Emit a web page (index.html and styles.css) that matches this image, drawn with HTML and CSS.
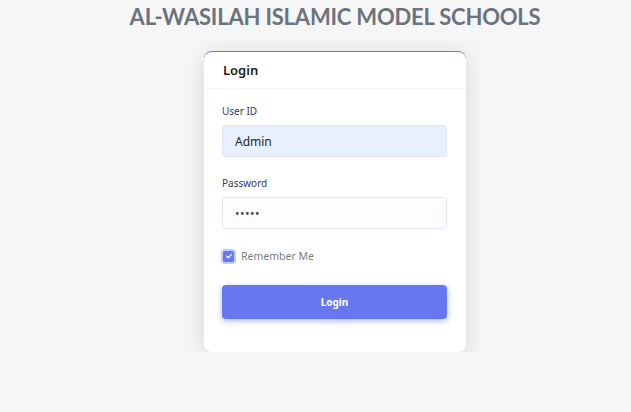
FILE: index.html
```html
<!DOCTYPE html>
<html lang="en">
<head>
<meta charset="utf-8">
<title>Login</title>
<link rel="stylesheet" href="styles.css">
</head>
<body>
<div class="page">
  <h1 class="brand">AL-WASILAH ISLAMIC MODEL SCHOOLS</h1>
  <div class="card">
    <div class="card-header"><h4>Login</h4></div>
    <form class="card-body">
      <div class="field">
        <label class="label" for="uid">User ID</label>
        <input id="uid" class="input input-filled" type="text" value="Admin">
      </div>
      <div class="field">
        <label class="label" for="pwd">Password</label>
        <input id="pwd" class="input" type="password" value="admin">
      </div>
      <div class="remember">
        <span class="check"><svg viewBox="0 0 10 10" width="8" height="8"><path d="M2 5.2 L4.1 7.2 L8 3" fill="none" stroke="#fff" stroke-width="1.6" stroke-linecap="round" stroke-linejoin="round"/></svg></span>
        <span class="remember-text">Remember Me</span>
      </div>
      <button type="button" class="btn">Login</button>
    </form>
  </div>
</div>
</body>
</html>
```

FILE: styles.css
```css
* { box-sizing: border-box; }
html, body { margin: 0; padding: 0; }
body {
  background: #f6f6f6;
  font-family: "Noto Sans", "Liberation Sans", sans-serif;
}
.page {
  padding-left: 39px;
  padding-top: 2px;
  display: flex;
  flex-direction: column;
  align-items: center;
}
.brand {
  margin: 0;
  font-family: Lato, "Noto Sans", sans-serif;
  font-weight: 700;
  font-size: 22px;
  line-height: 30px;
  letter-spacing: -0.2px;
  color: #6b737e;
}
.card {
  margin-top: 19px;
  width: 262px;
  background: #fff;
  border-radius: 8px;
  border-top: 1px solid #6777ef;
  box-shadow: 0 4px 22px rgba(0, 0, 0, 0.13);
}
.card-header {
  height: 37px;
  padding: 0 19px;
  display: flex;
  align-items: center;
  border-bottom: 1px solid #f6f6f9;
}
.card-header h4 {
  margin: 0;
  font-size: 13px;
  font-weight: 600;
  color: #191d21;
}
.card-body {
  padding: 14px 19px 33px 18px;
  display: flex;
  flex-direction: column;
}
.field {
  display: flex;
  flex-direction: column;
  margin-bottom: 18px;
}
.label {
  font-size: 10px;
  line-height: 16px;
  color: #34395e;
  margin-bottom: 6px;
}
.input {
  height: 32px;
  width: 100%;
  border: 1px solid #e4e6fc;
  border-radius: 3px;
  background: #fdfdff;
  padding: 0 12px;
  font-family: "Noto Sans", sans-serif;
  font-size: 12px;
  color: #212529;
  outline: none;
}
.input-filled {
  background: #e8f0fe;
  border-color: #dde5f7;
}
.input[type=password] {
  font-size: 12px;
  letter-spacing: 0.5px;
  color: #495057;
}
.remember {
  display: flex;
  align-items: center;
  margin-top: 1px;
  height: 16px;
}
.check {
  width: 11px;
  height: 11px;
  margin-left: 1px;
  border-radius: 2px;
  background: #6777ef;
  box-shadow: 0 0 0 2px #b3cdfc;
  display: flex;
  align-items: center;
  justify-content: center;
}
.remember-text {
  margin-left: 7px;
  font-size: 10.5px;
  color: #7a8087;
}
.btn {
  margin-top: 21px;
  height: 34px;
  width: 100%;
  border: none;
  border-radius: 4px;
  background: #6777ef;
  color: #fff;
  font-family: "Noto Sans", sans-serif;
  font-size: 10px;
  font-weight: 700;
  box-shadow: 0 2px 6px #acb5f6;
}
```
